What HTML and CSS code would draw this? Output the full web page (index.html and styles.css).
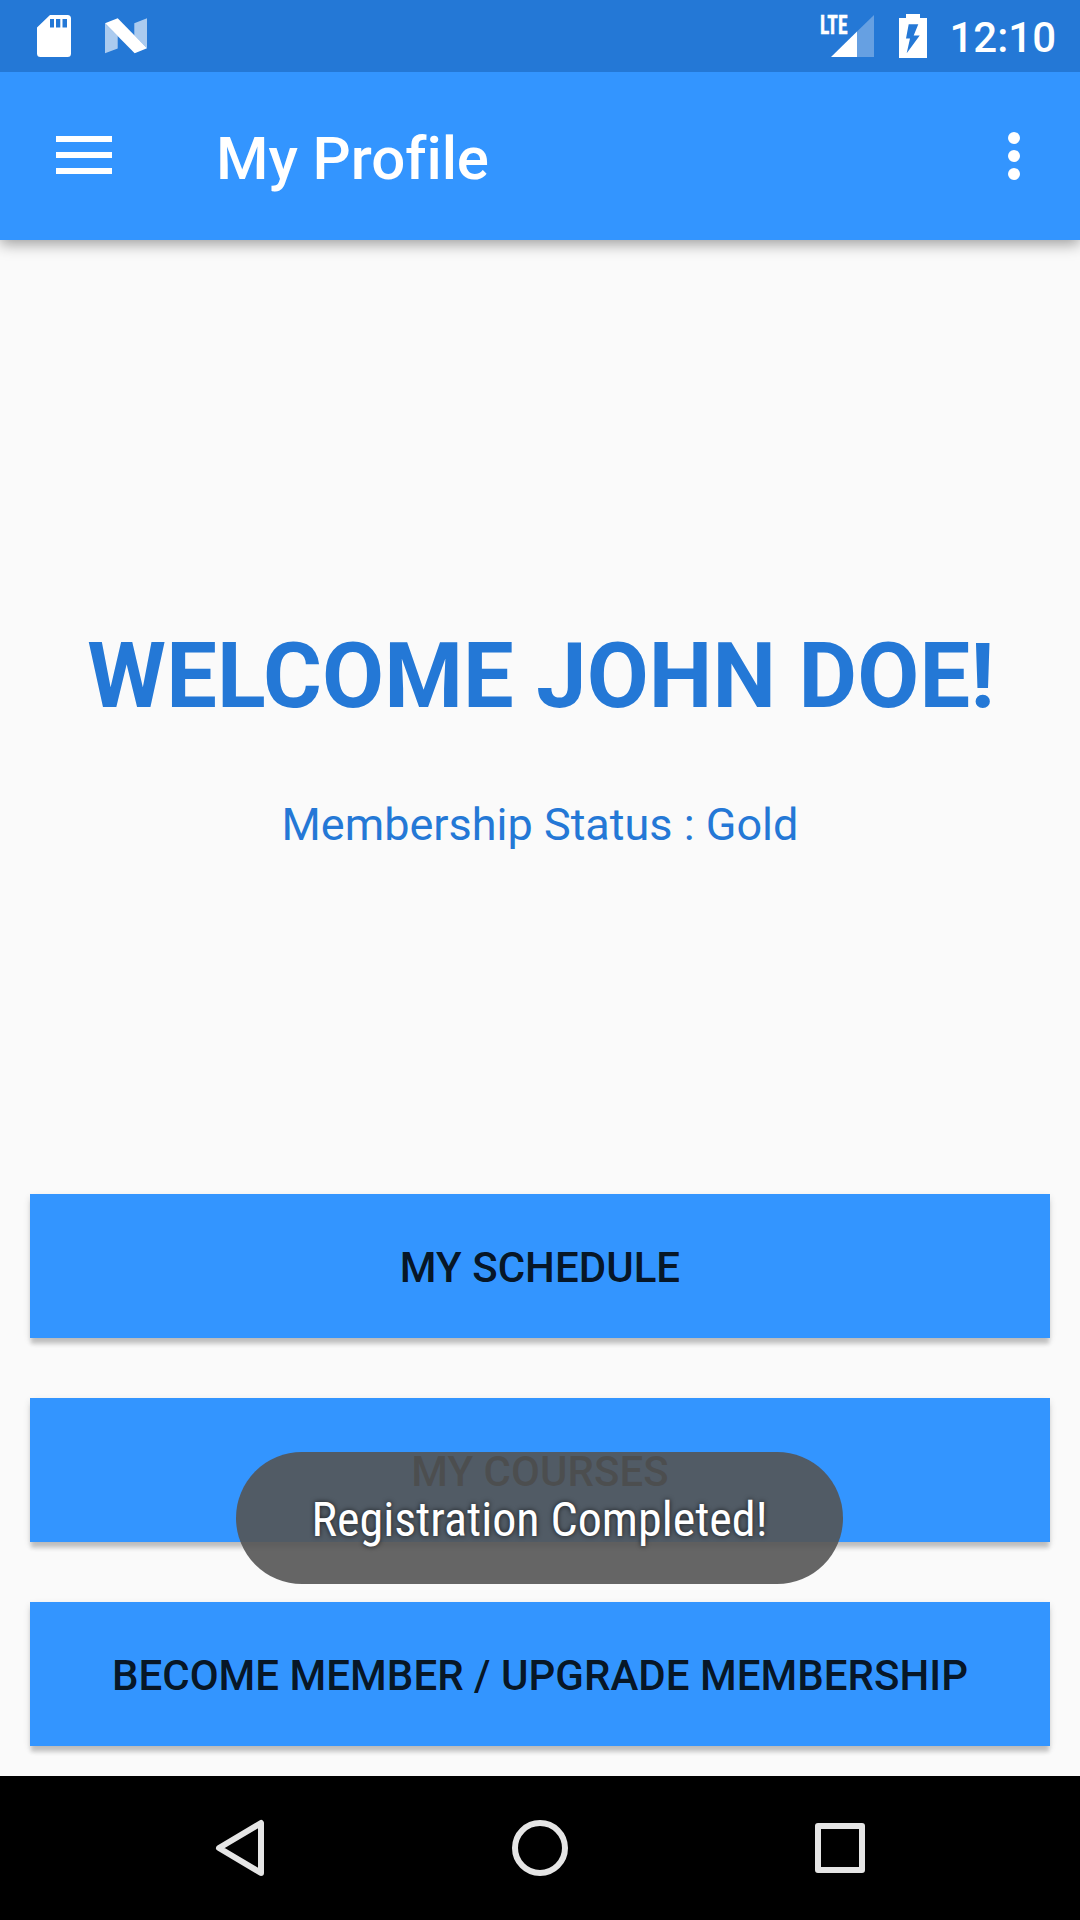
FILE: index.html
```html
<!DOCTYPE html>
<html lang="en">
<head>
  <meta charset="utf-8">
  <title>My Profile</title>
  <link rel="stylesheet" href="styles.css">
</head>
<body>
  <div class="screen">
    <header class="status-bar">
      <div class="status-group notifications">
        <svg class="sd-icon" width="34" height="42" viewBox="0 0 34 42">
          <path fill="#fff" fill-rule="evenodd" d="M13 0H30.500Q34 0 34 3.500V38.500Q34 42 30.500 42H3.500Q0 42 0 38.500V12.500ZM13 4V12.500H17V4ZM19 4V12.500H23.300V4ZM25.500 4V12.500H30V4Z"/>
        </svg>
        <svg class="n-icon" width="42" height="36" viewBox="0 0 42 36">
          <path fill="#fff" fill-opacity=".62" d="M0 5.500L12.700 18V30.600L0 35.300ZM29.300 5.300L42 .3V30.300L29.300 17.500Z"/>
          <path fill="#fff" d="M0 5.300L12.700 .3L42 30.300L29.700 35.300Z"/>
        </svg>
      </div>
      <div class="status-group indicators">
        <svg class="signal-icon" width="54" height="42" viewBox="0 0 54 42">
          <path fill="#fff" fill-opacity=".3" d="M37 16.500L54 0V42H37Z"/>
          <path fill="#fff" d="M11 42L37 16.500V42Z"/>
          <text class="lte" x="0" y="18.500" textLength="27.500" lengthAdjust="spacingAndGlyphs">LTE</text>
        </svg>
        <svg class="battery-icon" width="28" height="44" viewBox="0 0 28 44">
          <path fill="#fff" fill-rule="evenodd" d="M7 0H21V4H28V44H0V4H7ZM9.700 10.300L7 24.500H11L7.700 39.300L20.700 21.500H14.700L19.300 10.300Z"/>
        </svg>
        <span class="clock">12:10</span>
      </div>
    </header>

    <div class="toolbar">
      <svg class="menu-icon" width="56" height="38" viewBox="0 0 56 38">
        <path fill="#fff" d="M0 0H56V6H0ZM0 16H56V22H0ZM0 32H56V38H0Z"/>
      </svg>
      <h1 class="title">My Profile</h1>
      <svg class="more-icon" width="12" height="48" viewBox="0 0 12 48">
        <g fill="#fff"><circle cx="6" cy="6" r="6"/><circle cx="6" cy="24" r="6"/><circle cx="6" cy="42" r="6"/></g>
      </svg>
    </div>

    <main class="content">
      <section class="profile">
        <h2 class="welcome">WELCOME JOHN DOE!</h2>
        <p class="membership">Membership Status : Gold</p>
      </section>
      <div class="actions">
        <button class="action">MY SCHEDULE</button>
        <button class="action">MY COURSES</button>
        <button class="action">BECOME MEMBER / UPGRADE MEMBERSHIP</button>
      </div>
    </main>

    <nav class="nav-bar">
      <svg width="60" height="60" viewBox="0 0 60 60"><path class="nav-shape" d="M9 30L51 5V55Z"/></svg>
      <svg width="60" height="60" viewBox="0 0 60 60"><circle class="nav-shape" cx="30" cy="30" r="25"/></svg>
      <svg width="60" height="60" viewBox="0 0 60 60"><rect class="nav-shape" x="8" y="8" width="44" height="44"/></svg>
    </nav>

    <div class="toast"><span class="toast-text">Registration Completed!</span></div>
  </div>
</body>
</html>
```
FILE: styles.css
```css
* {
  box-sizing: border-box;
}

body {
  margin: 0;
  font-family: Roboto, sans-serif;
}

svg {
  display: block;
  flex: none;
}

.screen {
  position: relative;
  display: flex;
  flex-direction: column;
  width: 1080px;
  height: 1920px;
  overflow: hidden;
  background: #fafafa;
}

.status-bar {
  position: relative;
  z-index: 1;
  display: flex;
  justify-content: space-between;
  flex: none;
  height: 72px;
  padding: 0 24px 0 37px;
  background: #2478d6;
  color: #fff;
}

.status-group {
  display: flex;
  align-items: center;
}

.notifications {
  gap: 34px;
}

.signal-icon {
  margin-right: 25px;
  overflow: visible;
}

.battery-icon {
  margin-right: 22px;
}

.lte {
  font: 700 26px "Roboto Condensed", Roboto, sans-serif;
  fill: #fff;
  stroke: #fff;
  stroke-width: .5;
}

.clock {
  padding-top: 3px;
  font-size: 42px;
  font-weight: 500;
  line-height: 69px;
}

.toolbar {
  display: flex;
  align-items: center;
  flex: none;
  height: 168px;
  padding: 0 60px 0 56px;
  background: #3395ff;
  color: #fff;
  box-shadow: 0 4px 14px rgba(0, 0, 0, .38);
}

.menu-icon {
  margin: 0 104px 2px 0;
}

.title {
  flex: 1;
  margin: 0;
  padding-top: 6px;
  font-size: 60px;
  font-weight: 500;
  letter-spacing: -.05px;
  font-variant-ligatures: common-ligatures;
  line-height: 70px;
}

.content {
  display: flex;
  flex: 1;
  flex-direction: column;
  justify-content: space-between;
  padding: 0 30px 30px;
}

.profile {
  padding-top: 384px;
  color: #2478d6;
  text-align: center;
}

.welcome {
  margin: 0;
  padding-left: 2px;
  font-size: 90px;
  font-weight: 700;
  letter-spacing: .12px;
  line-height: 106px;
  white-space: nowrap;
}

.membership {
  margin: 68px 0 0;
  font-size: 45px;
  line-height: 53px;
}

.actions {
  display: flex;
  flex-direction: column;
  gap: 60px;
}

.action {
  height: 144px;
  padding: 2px 0 0;
  border: 0;
  background: #3395ff;
  box-shadow: 0 7px 4px -1px rgba(0, 0, 0, .17), 0 3px 7px rgba(0, 0, 0, .12);
  color: rgba(0, 0, 0, .87);
  font: 500 42px Roboto, sans-serif;
  letter-spacing: .03px;
}

.nav-bar {
  display: flex;
  align-items: center;
  justify-content: center;
  gap: 240px;
  flex: none;
  height: 144px;
  background: #000;
}

.nav-shape {
  fill: none;
  stroke: #e5e5e5;
  stroke-width: 6;
  stroke-linejoin: round;
}

/* Transient message floating over the action buttons. */
.toast {
  position: absolute;
  bottom: 336px;
  left: 236px;
  display: flex;
  align-items: center;
  justify-content: center;
  width: 607px;
  height: 132px;
  padding-top: 2px;
  border-radius: 66px;
  background: rgba(84, 84, 84, .9);
  color: #fff;
}

.toast-text {
  font-family: "Roboto Condensed", Roboto, sans-serif;
  font-size: 48px;
  font-stretch: 75%;
  white-space: nowrap;
  text-shadow: 0 0 5px rgba(0, 0, 0, .73);
}
```
